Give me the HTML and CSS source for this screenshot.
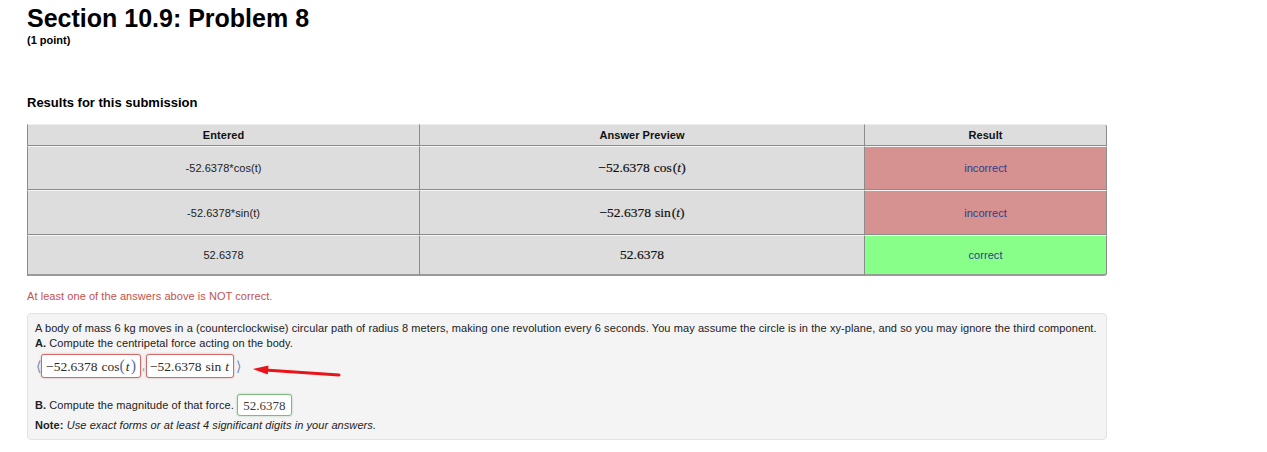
FILE: index.html
```html
<!DOCTYPE html>
<html>
<head>
<meta charset="utf-8">
<title>Section 10.9: Problem 8</title>
<link rel="stylesheet" href="styles.css">
</head>
<body>
<div class="page">
  <h1 class="title">Section 10.9: Problem 8</h1>
  <div class="points">(1 point)</div>

  <h2 class="results-title">Results for this submission</h2>
  <table class="results">
    <colgroup><col class="c1"><col class="c2"><col class="c3"></colgroup>
    <thead>
      <tr><th>Entered</th><th>Answer Preview</th><th>Result</th></tr>
    </thead>
    <tbody>
      <tr class="r1">
        <td>-52.6378*cos(t)</td>
        <td class="math"><span class="num">−52.6378</span><span class="fn">cos</span>(<i>t</i>)</td>
        <td class="bad">incorrect</td>
      </tr>
      <tr class="r2">
        <td>-52.6378*sin(t)</td>
        <td class="math"><span class="num">−52.6378</span><span class="fn">sin</span>(<i>t</i>)</td>
        <td class="bad">incorrect</td>
      </tr>
      <tr class="r3">
        <td>52.6378</td>
        <td class="math">52.6378</td>
        <td class="good">correct</td>
      </tr>
    </tbody>
  </table>

  <div class="error-msg">At least one of the answers above is NOT correct.</div>

  <div class="problem">
    <div class="line">A body of mass 6 kg moves in a (counterclockwise) circular path of radius 8 meters, making one revolution every 6 seconds. You may assume the circle is in the xy-plane, and so you may ignore the third component.</div>
    <div class="line"><b>A.</b> Compute the centripetal force acting on the body.</div>
    <div class="answer-row">
      <span class="bracket">⟨</span>
      <span class="ans ans-bad w1"><span class="mq">−52.6378<span class="sp"></span>cos<span class="par">(</span><i>t</i><span class="par">)</span></span></span>
      <span class="comma">,</span>
      <span class="ans ans-bad w2"><span class="mq">−52.6378<span class="sp"></span>sin<span class="sp2"></span><i>t</i></span></span>
      <span class="bracket right">⟩</span>
    </div>
    <div class="b-row">
      <span><b>B.</b> Compute the magnitude of that force.</span>
      <span class="ans ans-good w3"><span class="mq">52.6378</span></span>
    </div>
    <div class="line note"><b>Note:</b> <i>Use exact forms or at least 4 significant digits in your answers.</i></div>

    <svg class="arrow" width="100" height="20" viewBox="0 0 100 20" aria-hidden="true">
      <line x1="17" y1="6" x2="91" y2="11" stroke="#e8141a" stroke-width="3" stroke-linecap="round"/>
      <polygon points="5,5 20.5,1.5 19.8,10.6" fill="#e8141a"/>
    </svg>
  </div>
</div>
</body>
</html>
```

FILE: styles.css
```css
html, body {
  margin: 0;
  padding: 0;
  background: #ffffff;
}

body {
  font-family: "Liberation Sans", Arial, sans-serif;
  color: #000;
}

.page {
  padding: 0 27px;
  width: 1080px;
}

.title {
  margin: 4px 0 0;
  font-size: 25px;
  line-height: 29px;
  font-weight: bold;
  color: #000;
}

.points {
  margin-top: 1px;
  font-size: 11px;
  line-height: 13px;
  font-weight: bold;
}

.results-title {
  margin: 48px 0 0;
  font-size: 13px;
  line-height: 15px;
  font-weight: bold;
}

.results {
  margin-top: 14px;
  width: 1080px;
  table-layout: fixed;
  border-collapse: separate;
  border-spacing: 0;
  border-top-right-radius: 3px;
}

.results col.c1 { width: 393px; }
.results col.c2 { width: 445px; }
.results col.c3 { width: 242px; }

.results th,
.results td {
  background: #dddddd;
  text-align: center;
  padding: 0;
  font-size: 11px;
  letter-spacing: 0.05px;
  border-top: 1px solid #f4f4f4;
  border-right: 1px solid #8c8c8c;
  border-bottom: 1px solid #8c8c8c;
}

.results th:first-child,
.results td:first-child {
  border-left: 1px solid #8c8c8c;
}

.results th {
  height: 20px;
  font-weight: bold;
  color: #111;
  border-top-color: #eeeeee;
}

.results th:last-child { border-top-right-radius: 3px; }

.results tr.r1 td { height: 42px; }
.results tr.r2 td { height: 43px; }
.results tr.r3 td { height: 38px; border-bottom: 2px solid #9a9a9a; }
.results tr.r3 td:last-child { border-bottom-right-radius: 3px; }

.results td { color: #222; }

.results td.math {
  font-family: "Liberation Serif", "Times New Roman", serif;
  font-size: 13.5px;
  color: #111;
  font-weight: normal;
  letter-spacing: 0;
  -webkit-text-stroke: 0.2px #111;
}

.results td.math .num { margin-right: 4px; }
.results td.math .fn { margin-right: 1px; }
.results td.math i { font-style: italic; }

.results td.bad {
  background: #d69191;
  color: #283f8c;
}

.results td.good {
  background: #88ff88;
  color: #283f8c;
}

.error-msg {
  margin-top: 14px;
  font-size: 11px;
  line-height: 13px;
  letter-spacing: 0.06px;
  color: #c4524f;
}

.problem {
  position: relative;
  margin-top: 10px;
  height: 112px;
  padding: 7px 7px 6px;
  background: #f4f4f4;
  border: 1px solid #e2e2e2;
  border-radius: 4px;
  font-size: 11px;
  color: #222;
}

.line {
  line-height: 15px;
  white-space: nowrap;
  letter-spacing: 0.085px;
}

.answer-row {
  margin-top: 3px;
  height: 24px;
  display: flex;
  align-items: center;
}

.bracket {
  font-family: "DejaVu Sans", sans-serif;
  font-size: 14px;
  color: #6f8fc2;
  width: 6px;
  margin-left: 1px;
  line-height: 24px;
}

.bracket.right {
  margin-left: 2px;
}

.comma {
  width: 5px;
  text-align: center;
  color: #6f8fc2;
  line-height: 24px;
  font-size: 12px;
}

.ans {
  box-sizing: border-box;
  height: 24px;
  display: inline-flex;
  align-items: center;
  justify-content: center;
  background: #ffffff;
  border-radius: 3px;
}

.ans-bad {
  border: 1px solid #d06a68;
  box-shadow: 0 0 2px rgba(200, 60, 60, 0.45);
}

.ans-good {
  border: 1px solid #7dbb7d;
  box-shadow: 0 0 2px rgba(70, 160, 70, 0.45);
  height: 22px;
}

.w1 { width: 100px; margin-left: -1px; }
.w2 { width: 88px; }
.w3 { width: 55px; margin-left: 3px; }

.mq {
  font-family: "Liberation Serif", "Times New Roman", serif;
  font-size: 13.5px;
  color: #2a2a2a;
  white-space: nowrap;
  line-height: 16px;
  padding-top: 1px;
}

.mq .sp { display: inline-block; width: 4px; }
.mq .sp2 { display: inline-block; width: 3px; }
.mq .par {
  font-size: 16px;
  color: #5a6e9a;
}
.mq i { font-style: italic; padding: 0 1px; }

.ans-good .mq {
  color: #3a3a3a;
  font-size: 13px;
}

.b-row {
  margin-top: 16px;
  height: 22px;
  display: flex;
  align-items: center;
  letter-spacing: 0.08px;
}

.b-row .ans { letter-spacing: 0; }

.note {
  margin-top: 2px;
}

.arrow {
  position: absolute;
  left: 220px;
  top: 50px;
}
```
